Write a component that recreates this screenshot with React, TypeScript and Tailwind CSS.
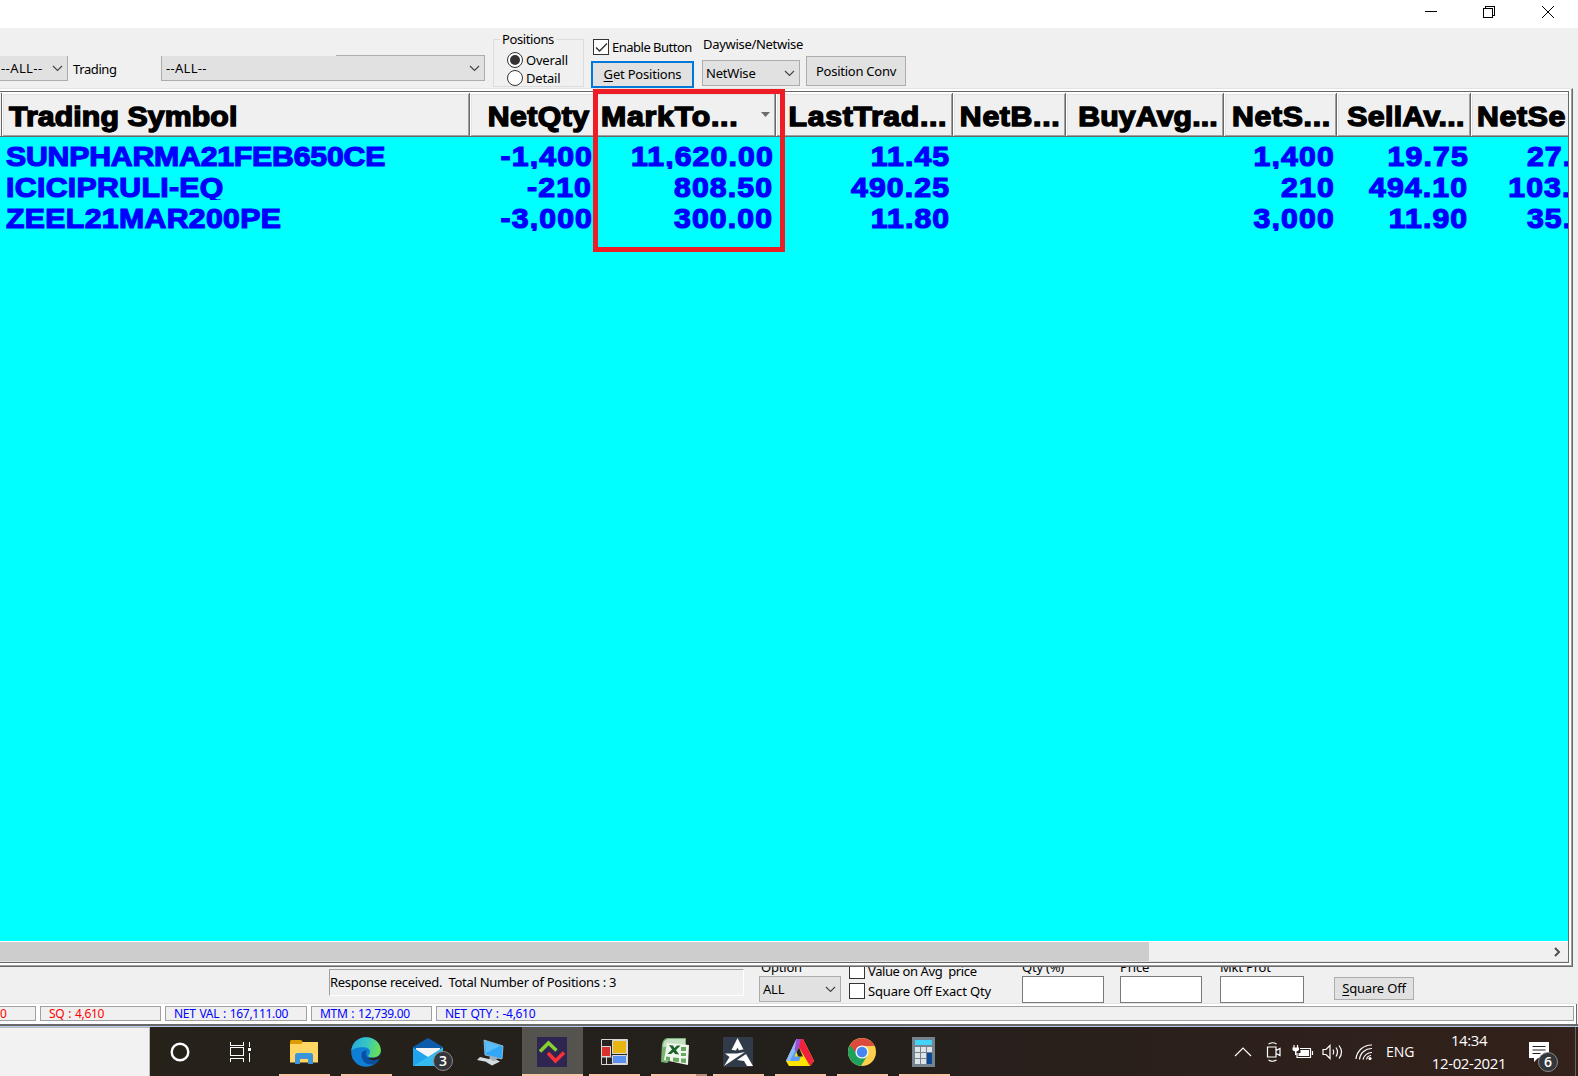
import type { ReactNode } from 'react';
import clsx from 'clsx';

type Column = {
  title: string;
  width: string;
  align: 'left' | 'right';
  headPad: string;
  cells: [string, string, string];
  sorted?: boolean;
};

const COLUMNS: Column[] = [
  { title: 'Trading Symbol', width: 'w-[468px]', align: 'left', headPad: 'pl-[7px] tracking-[0.1px]', cells: ['SUNPHARMA21FEB650CE', 'ICICIPRULI-EQ', 'ZEEL21MAR200PE'] },
  { title: 'NetQty', width: 'w-[125px]', align: 'right', headPad: 'pr-[4px]', cells: ['-1,400', '-210', '-3,000'] },
  { title: 'MarkTo...', width: 'w-[181px]', align: 'left', headPad: 'pl-[6px] tracking-[0.7px]', cells: ['11,620.00', '808.50', '300.00'], sorted: true },
  { title: 'LastTrad...', width: 'w-[177px]', align: 'right', headPad: 'pr-[5px] tracking-[0.6px]', cells: ['11.45', '490.25', '11.80'] },
  { title: 'NetB...', width: 'w-[113px]', align: 'right', headPad: 'pr-[5px] tracking-[0.6px]', cells: ['', '', ''] },
  { title: 'BuyAvg...', width: 'w-[158px]', align: 'right', headPad: 'pr-[5px] tracking-[0.1px]', cells: ['', '', ''] },
  { title: 'NetS...', width: 'w-[113px]', align: 'right', headPad: 'pr-[5px] tracking-[0.6px]', cells: ['1,400', '210', '3,000'] },
  { title: 'SellAv...', width: 'w-[134px]', align: 'right', headPad: 'pr-[5px] tracking-[0.3px]', cells: ['19.75', '494.10', '11.90'] },
  { title: 'NetSe', width: 'w-[102px]', align: 'left', headPad: 'pl-[6px] tracking-[0.6px]', cells: ['27.', '103.', '35.'] },
];

const STATUS = [
  { text: 'SQ : 4,610', tone: 'text-[#ff0000]', width: 'w-[121px]' },
  { text: 'NET VAL : 167,111.00', tone: 'text-[#0000ff]', width: 'w-[142px]' },
  { text: 'MTM : 12,739.00', tone: 'text-[#0000ff]', width: 'w-[121px]' },
  { text: 'NET QTY : -4,610', tone: 'text-[#0000ff]', width: 'w-[1138px]' },
];

function Arrow({ className }: { className?: string }) {
  return (
    <svg className={clsx('shrink-0', className)} width="11" height="7" viewBox="0 0 11 7" fill="none" stroke="#444" strokeWidth="1.2">
      <path d="M1 1l4.5 4.5L10 1" />
    </svg>
  );
}

function Select({ value, className }: { value: string; className?: string }) {
  return (
    <div className={clsx('flex shrink-0 items-center justify-between border border-[#adadad] bg-[#e1e1e1] pr-[4px]', className)}>
      <span>{value}</span>
      <Arrow />
    </div>
  );
}

function Radio({ checked }: { checked?: boolean }) {
  return (
    <span className="flex size-4 shrink-0 items-center justify-center rounded-full border border-[#333] bg-white">
      {checked && <span className="size-[10px] rounded-full bg-[#333]" />}
    </span>
  );
}

function CheckBox({ checked }: { checked?: boolean }) {
  return (
    <span className="flex size-4 shrink-0 items-center justify-center border border-[#333] bg-white">
      {checked && (
        <svg width="13" height="13" viewBox="0 0 13 13" fill="none" stroke="#333" strokeWidth="1.4">
          <path d="M1 6.5l3.6 3.6L12 2.6" />
        </svg>
      )}
    </span>
  );
}

function TitleBar() {
  return (
    <div className="flex h-7 shrink-0 justify-end bg-white">
      <svg width="160" height="28" viewBox="0 0 160 28" fill="none" stroke="#000" shapeRendering="crispEdges">
        <path d="M7 11.5h12" />
        <path d="M65.500 8.500h9v9h-9zM67.500 8.500v-2h9v9h-2" />
        <path d="M124 6l12 12M136 6l-12 12" shapeRendering="auto" />
      </svg>
    </div>
  );
}

function Toolbar() {
  return (
    <div className="flex h-[60px] shrink-0 items-start">
      <Select value="--ALL--" className="mt-7 h-[25px] w-[68px] border-l-0 border-t-0 pl-[1px] tracking-[0.4px]" />
      <span className="ml-[5px] mt-[33px] w-[88px] tracking-[-0.4px]">Trading</span>
      <div className="relative">
        <Select value="--ALL--" className="mt-7 h-[25px] w-[324px] border-t-0 pl-1 tracking-[0.3px]" />
        <div className="absolute right-0 top-[27px] h-px w-[149px] bg-[#adadad]" />
      </div>
      <fieldset className="ml-2 mt-[3px] h-[56px] w-[91px] border border-[#dcdcdc] pl-[13px]">
        <legend className="-ml-[7px] px-[2px] tracking-[-0.4px]">Positions</legend>
        <div className="mt-[5px] flex items-center gap-[3px]"><Radio checked />Overall</div>
        <div className="mt-[2px] flex items-center gap-[3px]"><Radio />Detail</div>
      </fieldset>
      <div className="ml-[7px] w-[103px]">
        <div className="ml-[2px] mt-[11px] flex items-center gap-[3px] whitespace-nowrap tracking-[-0.5px]"><CheckBox checked />Enable Button</div>
        <div className="mt-[6px] flex h-[27px] items-center justify-center whitespace-nowrap border-2 border-[#0078d7] bg-[#e1e1e1] pb-[2px]">
          <span className="underline underline-offset-2">G</span>et Positions
        </div>
      </div>
      <div className="ml-2 w-[104px]">
        <div className="ml-px mt-[8px] whitespace-nowrap tracking-[-0.3px]">Daywise/Netwise</div>
        <Select value="NetWise" className="mt-[8px] h-[26px] w-[98px] pl-[3px]" />
      </div>
      <div className="mt-7 flex h-[30px] w-[100px] items-center justify-center whitespace-nowrap border border-[#adadad] bg-[#e1e1e1] tracking-[-0.25px]">Position Conv</div>
    </div>
  );
}

function HeaderCell({ col }: { col: Column }) {
  return (
    <div
      className={clsx(
        'flex h-[44px] shrink-0 items-center whitespace-nowrap border-b border-r border-b-[#696969] border-r-[#696969] bg-[#f0f0f0] shadow-[inset_1px_1px_0_#fff,inset_-1px_-1px_0_#a0a0a0,inset_2px_2px_0_#e3e3e3]',
        col.width,
        col.headPad,
        col.align === 'right' ? 'justify-end' : 'justify-between',
      )}
    >
      <span className={clsx('scale-x-110 pt-[5px]', col.align === 'right' ? 'origin-right' : 'origin-left')}>{col.title}</span>
      {col.sorted && (
        <svg className="mr-[5px]" width="9" height="5" viewBox="0 0 9 5"><path d="M0 0h9L4.500 5z" fill="#6d6d6d" /></svg>
      )}
    </div>
  );
}

function Positions() {
  return (
    <div className="relative mr-[5px] h-[879px] shrink-0 border-b border-r border-t border-b-[#696969] border-r-[#696969] border-t-[#e3e3e3]">
      <div className="flex h-full flex-col border-b border-r border-[#a0a0a0] bg-white pb-[2px] pr-[2px] pt-[2px]">
        <div className="flex min-h-0 flex-1 flex-col border-b border-r border-t border-b-[#696969] border-r-[#696969] border-t-[#696969] bg-[#f0f0f0]">
          <div className="flex overflow-hidden border-t border-[#fff] font-['Liberation_Sans'] text-[27.500px] font-bold leading-8 tracking-[0.4px] [-webkit-text-stroke:1.4px_black]">
            <div className="w-[2px] shrink-0 border-b border-r border-[#696969]" />
            {COLUMNS.map((c) => <HeaderCell key={c.title} col={c} />)}
          </div>
          <div className="min-h-0 flex-1 overflow-hidden bg-[#00ffff] pl-[2px] pt-[4px] font-['Liberation_Sans'] text-[27.500px] font-bold text-[#0000ff] [-webkit-text-stroke:1.2px_#0000ff]">
            {[0, 1, 2].map((row) => (
              <div key={row} className="flex h-[31px]">
                {COLUMNS.map((c, i) => (
                  <div
                    key={c.title}
                    className={clsx('h-[28px] shrink-0 overflow-hidden whitespace-nowrap leading-[31px]', c.width, i === 0 ? 'pl-[4px]' : i === 8 ? 'pr-px text-right tracking-[1px]' : 'pr-[2.500px] text-right tracking-[1px]', i === 0 && row > 0 && 'tracking-[0.3px]')}
                  >
                    <span className={clsx('inline-block scale-x-110', i === 0 ? 'origin-left' : 'origin-right')}>{c.cells[row]}</span>
                  </div>
                ))}
              </div>
            ))}
          </div>
          <div className="flex h-[21px] shrink-0 justify-between border-b border-t border-b-[#e3e3e3] border-t-white">
            <div className="w-[1149px] bg-[#cdcdcd]" />
            <svg className="mr-[7px] mt-[5px]" width="7" height="10" viewBox="0 0 7 10" fill="none" stroke="#505050" strokeWidth="2"><path d="M1 1l4 4-4 4" /></svg>
          </div>
        </div>
      </div>
      <div className="absolute left-[593px] top-0 h-[163px] w-[192px] border-[5px] border-[#ee1c25]" />
    </div>
  );
}

function Field({ label, className }: { label: string; className: string }) {
  return (
    <div className={clsx('shrink-0', className)}>
      <div className="-mt-[8px] whitespace-nowrap">{label}</div>
      <div className="mt-px h-[27px] border border-[#7a7a7a] bg-white" />
    </div>
  );
}

function OrderPanel() {
  return (
    <div className="flex h-9 shrink-0 items-start overflow-hidden pl-[329px]">
      <div className="mt-[2px] h-[27px] w-[415px] shrink-0 whitespace-pre border border-b-white border-l-[#a0a0a0] border-r-white border-t-[#a0a0a0] pt-[4px] tracking-[-0.28px]">
        Response received.  Total Number of Positions : 3
      </div>
      <div className="ml-[15px] w-[82px] shrink-0">
        <div className="-mt-[8px] ml-[2px]">Option</div>
        <Select value="ALL" className="mt-px h-[26px] pl-[3px]" />
      </div>
      <div className="ml-2 w-[173px] shrink-0">
        <div className="-mt-[4px] flex items-center gap-[3px] whitespace-pre tracking-[-0.4px]"><CheckBox />Value on Avg  price</div>
        <div className="mt-1 flex items-center gap-[3px] whitespace-nowrap tracking-[-0.15px]"><CheckBox />Square Off Exact Qty</div>
      </div>
      <Field label="Qty (%)" className="w-[82px]" />
      <Field label="Price" className="ml-4 w-[82px]" />
      <Field label="Mkt Prot" className="ml-[18px] w-[84px]" />
      <div className="ml-[30px] mt-[10px] flex h-[23px] w-[80px] items-center justify-center border border-[#adadad] bg-[#e1e1e1] pb-px">
        <span className="underline underline-offset-2">S</span>quare Off
      </div>
    </div>
  );
}

function StatusBar() {
  return (
    <div className="h-6 shrink-0 border-t border-[#e3e3e3]">
      <div className="mr-px flex h-[20px] gap-1 border-r border-[#696969] bg-white pb-px pt-[2px] text-[12px]">
        <div className="h-[15px] w-9 shrink-0 border border-l-0 border-[#a0a0a0] bg-[#f0f0f0] leading-[13px] text-[#ff0000]">0</div>
        {STATUS.map((s) => (
          <div key={s.text} className={clsx('h-[15px] shrink-0 whitespace-nowrap border border-[#a0a0a0] bg-[#f0f0f0] pl-2 leading-[13px] tracking-[-0.3px] [word-spacing:1px]', s.width, s.tone)}>
            {s.text}
          </div>
        ))}
      </div>
      <div className="h-[2px] bg-[#696969]" />
      <div className="h-px bg-[#b9c8ee]" />
    </div>
  );
}

function Task({ children, active, idle }: { children: ReactNode; active?: boolean; idle?: boolean }) {
  return (
    <div className={clsx('flex h-[49px] shrink-0 flex-col items-center', active ? 'ml-px w-[61px] bg-[#54534e]' : 'w-[62px]')}>
      <div className={clsx('flex h-[47px] items-center pt-[3px]', active && 'pr-px')}>{children}</div>
      {!idle && <div className={clsx('h-[2px] bg-[#f9c4aa]', active ? 'w-full' : 'w-[51px]')} />}
    </div>
  );
}

function Count({ n, className }: { n: number; className: string }) {
  return (
    <span className={clsx('absolute flex size-5 items-center justify-center rounded-full border border-[#8a8a8a] bg-[#33363a] text-[14px] font-semibold leading-none text-white', className)}>{n}</span>
  );
}

function Taskbar() {
  return (
    <div className="flex h-[49px] shrink-0 bg-linear-to-r from-[#272219] via-[#231f1b] to-[#33211b] font-['Open_Sans'] text-white">
      <div className="w-[150px] shrink-0 border-r border-t border-[#bbb] bg-[#f2f2f2]" />
      <div className="flex w-[60px] shrink-0 items-center justify-center pt-px">
        <svg width="20" height="20" viewBox="0 0 20 20"><circle cx="10" cy="10" r="8.300" fill="none" stroke="#fff" strokeWidth="2.400" /></svg>
      </div>
      <div className="flex w-[63px] shrink-0 items-center justify-center">
        <svg className="-ml-[3px]" width="21" height="20" viewBox="0 0 21 20" fill="none" stroke="#fff" shapeRendering="crispEdges">
          <path d="M.5 0v3.500h13V0M.5 20v-3.500h13V20M.5 5.500h13v8H.500zM19.500 0v5M19.500 11v9" />
          <path d="M18 6h3v3h-3z" fill="#fff" stroke="none" />
        </svg>
      </div>
      <Task>
        <svg width="28" height="24" viewBox="0 0 28 24">
          <path d="M0 1.500Q0 0 1.500 0h9.500l2 2v4H0z" fill="#dc9b05" />
          <path d="M0 4h11l2-2h15v20.500H0z" fill="#ffd564" />
          <path d="M5 24v-8.500q0-2.500 2.500-2.500h13q2.500 0 2.500 2.500V24h-5v-5h-8v5z" fill="#3b94dc" />
        </svg>
      </Task>
      <Task>
        <svg width="30" height="30" viewBox="0 0 30 30">
          <defs>
            <linearGradient id="edgeTop" x1="0" y1="0.300" x2="1" y2="0.500">
              <stop offset="0" stopColor="#2aa9e0" /><stop offset=".5" stopColor="#34c6c4" /><stop offset="1" stopColor="#6ee04d" />
            </linearGradient>
          </defs>
          <circle cx="15" cy="15" r="14.800" fill="#0f7fd6" />
          <path d="M.3 14C1 5.500 7 .2 15 .2c8.500 0 14.800 6 14.800 12.800 0 5-4 7.500-8 7.500-4.500 0-5.500-1.500-3.500-3.500 1.500-2 .7-6.500-5-6.800C7.500 9.800 2 11 .3 14z" fill="url(#edgeTop)" />
          <path d="M10.500 17c-.5 6 4 11.500 12 10.500 2-.7 4.500-2.500 6-5 .3-.6-.2-.8-.7-.5-4 2-9.500 1.500-11.500-2-1.500-2.300-1.800-4.500-.3-6.500-3-.3-5.200 1-5.500 3.500z" fill="#0b4fa0" />
          <path d="M30 20.500l-2 1.500c-4 2-9.500 1.500-11.500-2 1 1 3 1 5 .7 3.500 0 6.500-1 8-4.500z" fill="#272219" />
        </svg>
      </Task>
      <Task idle>
        <div className="relative">
          <svg width="30" height="29" viewBox="0 0 30 29">
            <path d="M0 9L15 0l15 9v3H0z" fill="#0d5cab" />
            <path d="M3 10h24v11H3z" fill="#f4f4f4" />
            <path d="M0 9.500L15 19 30 9.500V28H0z" fill="#20a4ec" />
            <path d="M30 9.500L15 19 0 28h30z" fill="#45cdf5" opacity=".55" />
          </svg>
          <Count n={3} className="-right-[10px] top-[13px]" />
        </div>
      </Task>
      <Task idle>
        <svg width="28" height="27" viewBox="0 0 28 27">
          <path d="M8 1l19 6-1 13-17-4z" fill="#31a8f5" stroke="#a9c8da" strokeWidth=".8" />
          <path d="M9 2l15 5-14 7z" fill="#74ccff" opacity=".6" />
          <path d="M14 17l8 2-3 3-6-1z" fill="#9fb0bb" />
          <path d="M4 18l13 3-3 2.500-13-2.500zM10 23l11-2 3 1.500-8 4z" fill="#d5dde3" />
        </svg>
      </Task>
      <Task active>
        <svg width="30" height="30" viewBox="0 0 30 30" fill="none" strokeWidth="3.600">
          <path d="M0 0h30v30H0z" fill="#2e2550" />
          <path d="M3 14.500L11.500 6l8 7.500" stroke="#86cf33" />
          <path d="M11 16l7.500 8L27 15.500" stroke="#fb3035" />
        </svg>
      </Task>
      <Task>
        <svg width="27" height="26" viewBox="0 0 27 26" stroke="#d8d8d8">
          <path d="M.5.5h26v25H.5zM5.500 18v8M.5 18h10" fill="#272320" />
          <path d="M11.500 1.500h14v13h-14z" fill="#e9b512" />
          <path d="M.5 7.500h9v10h-9z" fill="#d8322f" />
          <path d="M11.500 16.500h14v8h-14z" fill="#5b91ee" />
        </svg>
      </Task>
      <div className="relative">
        <Task>
          <svg className="mr-[2px]" width="29" height="28" viewBox="0 0 29 28">
            <path d="M6 0h19v7L6 25l-6-1L1 6q1-5 5-6z" fill="#79b275" />
            <path d="M7 1h17v6L2 9q0-7 5-8z" fill="#c5dfc1" />
            <path d="M3 22L6 5l22 2-1 20z" fill="#f0f6ed" />
            <path d="M8 7l4 .5 1.500 2.500L16 7.500h3.500L15 12l3 4.500-4-.5-1.500-2L10 16H6.500l4.500-4.500z" fill="#1c6329" />
            <path d="M20 9h5v4h-5zM20 15h5v3h-5zM5 18.500l4 .5v4l-4-.5zM12 19.500l6 .5v4l-6-.5zM20 20.500h5v4.500l-5-.5z" fill="#68a960" />
          </svg>
        </Task>
        <div className="absolute bottom-0 right-0 h-[2px] w-[11px] bg-[#b98f7c]" />
      </div>
      <Task>
        <svg width="30" height="30" viewBox="0 0 30 30" fill="#fff">
          <path d="M0 0h30v30H0z" fill="#303a49" />
          <path d="M14.500 1l6 11.500q-3 0-4.500 1l-1.500-3-1.500 3q-2-.8-4.500-.5z" />
          <path d="M2 16.500h12l8-1.500L1 29l5.500-9z" />
          <path d="M14 23l9-6 7 12h-6l-3-5z" />
        </svg>
      </Task>
      <Task>
        <svg width="28" height="27" viewBox="0 0 28 27">
          <path d="M10.500 0H17l11 22-4 5H3l-3-5z" fill="#ffe500" />
          <path d="M10.500 0L0 22h13l2-4.500H8.500L13 8z" fill="#5c9cf5" />
          <path d="M10.500 0L0 22h4L12.500 4z" fill="#8fbdf9" />
          <path d="M10.500 0H15l10.500 26-4-4L13 8l-2 4-2.500-1z" fill="#a04ad0" />
          <path d="M15 0h2l11 22-4 5-11-19z" fill="#f1203c" />
          <path d="M10.500 13l2.500-4.500 4 9h-5z" fill="#282018" />
        </svg>
      </Task>
      <Task>
        <svg width="28" height="28" viewBox="0 0 28 28">
          <circle cx="14" cy="14" r="14" fill="#ffd04b" />
          <path d="M14 14L1.900 7A14 14 0 0 0 13 28l6-10z" fill="#1fa15e" />
          <path d="M1.900 7A14 14 0 0 1 26.500 8H14l-5 8z" fill="#dc4a3e" />
          <circle cx="14" cy="14" r="6.600" fill="#f3f3f3" />
          <circle cx="14" cy="14" r="5.200" fill="#4485f3" />
        </svg>
      </Task>
      <Task>
        <svg className="mr-px" width="23" height="30" viewBox="0 0 23 30">
          <path d="M0 0h23v30H0z" fill="#75838f" />
          <path d="M3 3h17v5H3z" fill="#43d4fa" />
          <path d="M3 10h5v5H3zM9 10h5v5H9zM15 10h5v5h-5zM3 16h5v5H3zM9 16h5v5H9zM3 22h5v5H3zM9 22h5v5H9z" fill="#dfe4e9" />
          <path d="M15 16h5v11h-5z" fill="#0b4a93" />
        </svg>
      </Task>
      <div className="ml-auto flex pt-[15px]">
        <svg width="140" height="20" viewBox="0 0 140 20" fill="none" stroke="#fff" strokeWidth="1.200">
          <path d="M1 14l8-8 8 8" />
          <path d="M33.500 5h8.500v10h-8.500zM42 8.500l4-2v7l-4-2M34.500 2q4-2.500 8 0M34.500 18q4 2.500 8 0" />
          <path d="M63 11v4.500h13.500v-9H66M78.500 9v4M60 3v3M63.500 3v3" />
          <path d="M66.500 8H75v6H64.500v-3h2zM58.500 5.500h6.500v2.500q-3.200 3-6.500 0zM61 9h1.500v4H61z" fill="#fff" stroke="none" />
          <path d="M89 7.500h3l4-4v13l-4-4h-3zM99 7.500q1.500 2.500 0 5M102 5.500q3 4.500 0 9M105 3.500q5 6.500 0 13" />
          <path d="M122 17A15.500 15.500 0 0 1 138 3M125.500 17.500A12 12 0 0 1 138 6.500M129 17.500A9 9 0 0 1 138 10.500M132.500 17.500A5 5 0 0 1 137 13.500" />
          <circle cx="136" cy="16.500" r="1.600" fill="#fff" stroke="none" />
        </svg>
        <span className="ml-[12px] w-[45px] text-[14px] leading-5 tracking-[0px]">ENG</span>
        <div className="-mt-[13px] w-[76px] text-center text-[15px] leading-[23px] tracking-[-0.4px]">
          <div>14:34</div>
          <div>12-02-2021</div>
        </div>
        <div className="relative ml-[22px] w-[46px]">
          <svg width="20" height="21" viewBox="0 0 20 21">
            <path d="M0 0h20v16H9l-4 4v-4H0z" fill="#fff" />
            <path d="M3.500 4.500h13M3.500 8h13M3.500 11.500h8" stroke="#2b201b" strokeWidth="1.200" />
          </svg>
          <Count n={6} className="left-[9px] top-[10px]" />
        </div>
        <div className="-mt-[15px] mr-[2px] h-[49px] w-px bg-[#666]" />
      </div>
    </div>
  );
}

export default function App() {
  return (
    <div className="flex h-[1076px] w-[1578px] flex-col overflow-hidden bg-[#f0f0f0] font-['Noto_Sans',sans-serif] text-[13px] leading-4 tracking-[-0.2px] text-black">
      <TitleBar />
      <Toolbar />
      <Positions />
      <OrderPanel />
      <StatusBar />
      <Taskbar />
    </div>
  );
}
